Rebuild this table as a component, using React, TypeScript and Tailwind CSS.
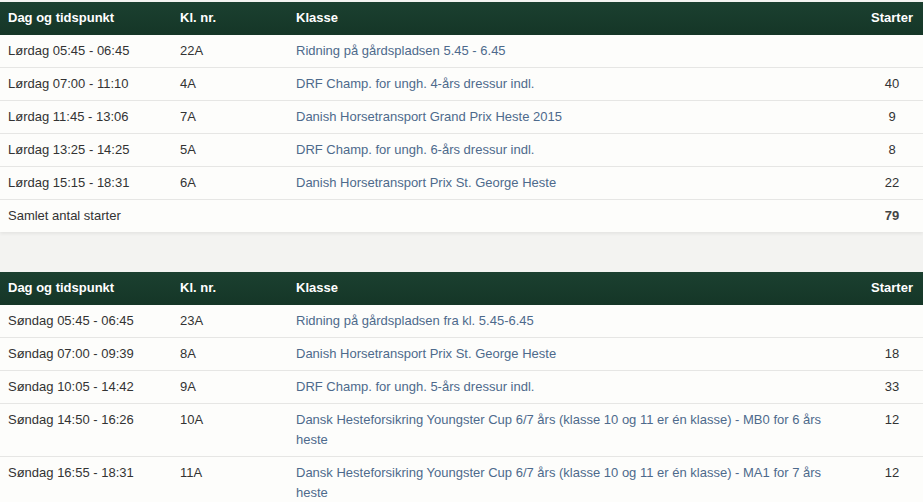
import React from "react";

type Row = { t: string; nr: string; k: string; s: string };

const sat: Row[] = [
  { t: "Lørdag 05:45 - 06:45", nr: "22A", k: "Ridning på gårdspladsen 5.45 - 6.45", s: "" },
  { t: "Lørdag 07:00 - 11:10", nr: "4A", k: "DRF Champ. for ungh. 4-års dressur indl.", s: "40" },
  { t: "Lørdag 11:45 - 13:06", nr: "7A", k: "Danish Horsetransport Grand Prix Heste 2015", s: "9" },
  { t: "Lørdag 13:25 - 14:25", nr: "5A", k: "DRF Champ. for ungh. 6-års dressur indl.", s: "8" },
  { t: "Lørdag 15:15 - 18:31", nr: "6A", k: "Danish Horsetransport Prix St. George Heste", s: "22" },
];

const sun: Row[] = [
  { t: "Søndag 05:45 - 06:45", nr: "23A", k: "Ridning på gårdspladsen fra kl. 5.45-6.45", s: "" },
  { t: "Søndag 07:00 - 09:39", nr: "8A", k: "Danish Horsetransport Prix St. George Heste", s: "18" },
  { t: "Søndag 10:05 - 14:42", nr: "9A", k: "DRF Champ. for ungh. 5-års dressur indl.", s: "33" },
  { t: "Søndag 14:50 - 16:26", nr: "10A", k: "Dansk Hesteforsikring Youngster Cup 6/7 års (klasse 10 og 11 er én klasse) - MB0 for 6 års heste", s: "12" },
  { t: "Søndag 16:55 - 18:31", nr: "11A", k: "Dansk Hesteforsikring Youngster Cup 6/7 års (klasse 10 og 11 er én klasse) - MA1 for 7 års heste", s: "12" },
];

function Table({ rows, total }: { rows: Row[]; total?: string }) {
  return (
    <table className="w-full table-fixed border-separate border-spacing-0 bg-[#fdfdfb] shadow-[0_2px_3px_rgba(0,0,0,0.06)]">
      <colgroup>
        <col className="w-[172px]" />
        <col className="w-[116px]" />
        <col />
        <col className="w-[62px]" />
      </colgroup>
      <thead>
        <tr className="bg-gradient-to-b from-[#1b4030] to-[#153627] text-white">
          <th className="text-left px-2 pt-[6px] pb-[7px] leading-5 font-bold">Dag og tidspunkt</th>
          <th className="text-left px-2 pt-[6px] pb-[7px] leading-5 font-bold">Kl. nr.</th>
          <th className="text-left px-2 pt-[6px] pb-[7px] leading-5 font-bold">Klasse</th>
          <th className="text-center px-2 pt-[6px] pb-[7px] leading-5 font-bold">Starter</th>
        </tr>
      </thead>
      <tbody>
        {rows.map((r, i) => {
          const b = i === rows.length - 1 && !total ? "" : " border-b border-[#e6e6e4]";
          return (
            <tr key={i}>
              <td className={"px-2 py-[6px] leading-5 align-top text-[#333]" + b}>{r.t}</td>
              <td className={"px-2 py-[6px] leading-5 align-top text-[#333]" + b}>{r.nr}</td>
              <td className={"px-2 py-[6px] leading-5 align-top text-[#4d6a8c]" + b}>{r.k}</td>
              <td className={"px-2 py-[6px] leading-5 align-top text-center text-[#333]" + b}>{r.s}</td>
            </tr>
          );
        })}
        {total && (
          <tr>
            <td className="px-2 py-[6px] leading-5 text-[#333]">Samlet antal starter</td>
            <td />
            <td />
            <td className="px-2 py-[6px] leading-5 text-center font-bold text-[#444]">{total}</td>
          </tr>
        )}
      </tbody>
    </table>
  );
}

export default function App() {
  return (
    <div
      className="min-h-[502px] bg-[#f3f3f1] pt-[2px] text-[13px]"
      style={{ fontFamily: '"Liberation Sans", Arial, Helvetica, sans-serif' }}
    >
      <Table rows={sat} total="79" />
      <div className="h-[40px]" />
      <Table rows={sun} />
    </div>
  );
}
